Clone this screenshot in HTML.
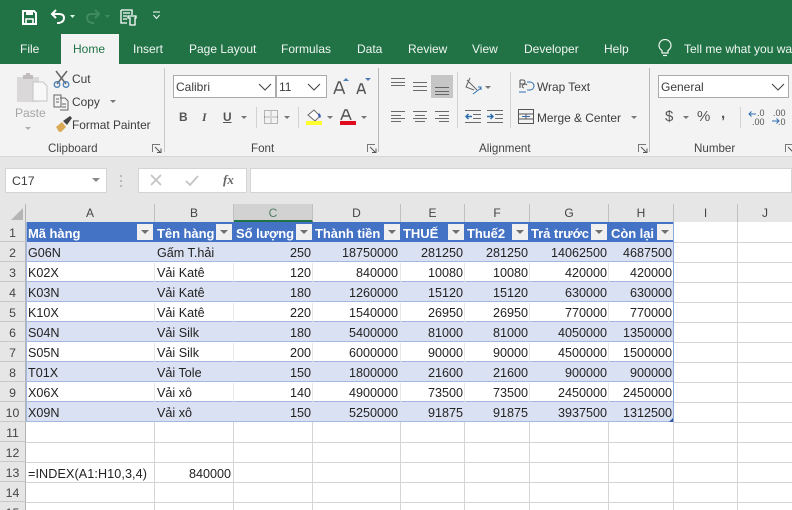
<!DOCTYPE html>
<html><head><meta charset="utf-8">
<style>
html,body{margin:0;padding:0}
#p{position:relative;width:792px;height:510px;overflow:hidden;background:#fff;font-family:"Liberation Sans","Noto Sans CJK SC",sans-serif;color:#262626}
#p div,#p svg{position:absolute}
.t{white-space:nowrap;font-size:11.9px;line-height:16px;color:#3c3c3c}
.tab{color:#f0f6f2;top:41px;font-size:12px;line-height:16px;white-space:nowrap}
.g{top:141px;font-size:11.6px;line-height:16px;color:#444;white-space:nowrap}
.sep{width:1px;background:#d2d2d2}
.box{background:#fff;border:1px solid #ababab;box-sizing:border-box;height:23px;top:75px;font-size:12px;line-height:23px;padding-left:2px;color:#3c3c3c}
.ch{top:204px;height:18px;line-height:18px;text-align:center;font-size:12px;color:#444;background:#e6e6e6;border-right:1px solid #c0c0c0;box-sizing:border-box}
.rh{left:0;width:26px;height:20px;line-height:23px;text-align:center;font-size:12.3px;color:#444;background:#e6e6e6;border-bottom:1px solid #c8c8c8;border-right:1px solid #b4b4b4;box-sizing:border-box}
.r{left:26px;width:648px;height:20px;box-sizing:border-box}
.s{background:#d9e1f2;border-bottom:1px solid #a3b8e0}
.w{background:#fff;border-bottom:1px solid #a3b8e0}
.r div{top:1px;height:19px;line-height:21px;font-size:12.6px;color:#222;white-space:nowrap;box-sizing:border-box}
.a{left:2px}.b{left:131px}
.C{left:207px;width:78px;text-align:right}
.D{left:286px;width:86px;text-align:right}
.E{left:374px;width:63px;text-align:right}
.F{left:438px;width:64px;text-align:right}
.G{left:503px;width:78px;text-align:right}
.H{left:582px;width:64px;text-align:right}
.hd{top:223px;height:20px;line-height:21px;font-size:13px;font-weight:bold;color:#fff;white-space:nowrap;letter-spacing:-.05px}
.fb{width:16px;height:16px;top:224px;background:#f0f0f0;box-sizing:border-box}
.fb:after{content:"";position:absolute;left:4px;top:6px;border:4px solid transparent;border-top:4px solid #707070;border-bottom:0}
.gl{background:#d4d4d4}
.gt{background:#e6e6e6}
.dd{width:0;height:0;border:3px solid transparent;border-top:3px solid #777;border-bottom:0}
</style></head><body><div id="p">

<div style="left:0;top:0;width:792px;height:64px;background:#217346"></div>
<div style="left:61px;top:34px;width:58px;height:30px;background:#f3f3f3"></div>
<div style="left:0;top:64px;width:792px;height:92px;background:#f3f3f3"></div>
<div style="left:0;top:156px;width:792px;height:1px;background:#d6d6d6"></div>
<div style="left:0;top:157px;width:792px;height:47px;background:#e6e6e6"></div>

<!-- QAT -->
<svg style="left:0;top:0" width="175" height="34" viewBox="0 0 175 34" fill="none">
<path d="M23 11h11l2 2v11H23z" stroke="#fff" stroke-width="2"/><path d="M26 11h7v4h-7z" fill="#fff"/><path d="M26 24v-5h7v5" stroke="#fff" stroke-width="1.6"/>
<path d="M56 10l-4 4 4 4" stroke="#fff" stroke-width="2"/><path d="M52 14h7q5 0 5 4t-5 5h-2" stroke="#fff" stroke-width="2"/>
<path d="M70 15h5l-2.500 3z" fill="#dfe" />
<path d="M95 10l4 4-4 4" stroke="#3f8a60" stroke-width="2"/><path d="M99 14h-7q-5 0-5 4t5 5h2" stroke="#3f8a60" stroke-width="2"/>
<path d="M105 15h5l-2.500 3z" fill="#3f8a60"/>
<path d="M121 10h11v5M121 10v13h6M123 13h7M123 16h4M123 19h4" stroke="#fff" stroke-width="1.300"/><path d="M128 16h8v2h-1v7h-5v-7h-2z" stroke="#fff" stroke-width="1.300"/>
<path d="M153 12h7" stroke="#fff"/><path d="M153.500 15l3 3.500 3-3.500" stroke="#fff"/>
</svg>

<!-- tabs -->
<div class="tab" style="left:20px">File</div>
<div class="tab" style="left:73px;color:#217346">Home</div>
<div class="tab" style="left:133px">Insert</div>
<div class="tab" style="left:189px">Page Layout</div>
<div class="tab" style="left:281px">Formulas</div>
<div class="tab" style="left:357px">Data</div>
<div class="tab" style="left:408px">Review</div>
<div class="tab" style="left:472px">View</div>
<div class="tab" style="left:524px">Developer</div>
<div class="tab" style="left:604px">Help</div>
<svg style="left:655px;top:39px" width="20" height="20" viewBox="0 0 20 20" fill="none"><path d="M7 14v-2.500c-1.500-1-3-2.500-3-5a6 6 0 0 1 12 0c0 2.500-1.500 4-3 5V14z" stroke="#f0f6f2" stroke-width="1.200"/><path d="M8 16.500h4" stroke="#f0f6f2" stroke-width="1.200"/></svg>
<div class="tab" style="left:684px">Tell me what you want to do</div>

<!-- Clipboard -->
<svg style="left:14px;top:68px" width="140" height="72" viewBox="0 0 140 72" fill="none">
<path d="M3 9h22v25H3z" fill="#dbd8d9"/><path d="M9 7h10v4H9z" fill="#c0bcbe"/><path d="M12 5h4v3h-4z" fill="#c0bcbe"/>
<path d="M19 14h10l4 4v15H19z" fill="#f8f8f8" stroke="#c4c4c4"/>
<path d="M42 3l10 13M53 3L43 16" stroke="#666" stroke-width="1.500"/>
<circle cx="43" cy="16.500" r="2.800" stroke="#4a7fb8" stroke-width="1.300"/><circle cx="52" cy="16.500" r="2.800" stroke="#4a7fb8" stroke-width="1.300"/>
<path d="M40 27h7l0 12h-7zM46 30h5l3 3v9h-8" stroke="#666"/><path d="M42 31h3M42 34h3M48 36h4M48 39h4" stroke="#666"/>
<path d="M42 59l6-5 4 5-5 5c-2 0-3-1-3-2z" fill="#d9a956"/><path d="M49 53l7-5 2 2-5 7z" fill="#444"/>
</svg>
<div class="t" style="left:15px;top:105px;font-size:12px;color:#a6a6a6">Paste</div>
<div class="dd" style="left:25px;top:127px;border-top-color:#b0b0b0"></div>
<div class="t" style="left:72px;top:71px">Cut</div>
<div class="t" style="left:72px;top:94px">Copy</div>
<div class="dd" style="left:110px;top:100px"></div>
<div class="t" style="left:72px;top:117px">Format Painter</div>
<div class="g" style="left:48px">Clipboard</div>
<svg style="left:152px;top:144px" width="10" height="10" fill="none"><path d="M.5 8V.5H8" stroke="#777"/><path d="M3 3l5 5M5 8.500h4V4.500" stroke="#555"/></svg>
<div class="sep" style="left:164px;top:68px;height:84px;background:#c8c8c8"></div>

<!-- Font -->
<div class="box" style="left:173px;width:103px">Calibri</div>
<div class="box" style="left:276px;width:51px">11</div>
<svg style="left:258px;top:82px" width="70" height="10" fill="none"><path d="M1 2l6 6 6-6M50 2l6 6 6-6" stroke="#444" stroke-width="1.100"/></svg>
<svg style="left:332px;top:77px" width="42" height="20" viewBox="0 0 42 20" fill="none">
<path d="M2 17l4.500-12h1.500l4.500 12M4 13h7" stroke="#555" stroke-width="1.500"/><path d="M11 4l3-3 3 3z" fill="#4a7fb8"/>
<path d="M25 17l3.500-10h1.500l3.500 10M26.500 13.500h5.500" stroke="#555" stroke-width="1.500"/><path d="M33 1h6l-3 3z" fill="#4a7fb8"/>
</svg>
<div class="t" style="left:179px;top:109px;font-weight:bold;color:#555">B</div>
<div class="t" style="left:202px;top:109px;font-style:italic;font-weight:bold;font-family:'Liberation Serif',serif;color:#555">I</div>
<div class="t" style="left:223px;top:109px;font-weight:bold;color:#555;text-decoration:underline">U</div>
<div class="dd" style="left:241px;top:116px"></div>
<div class="sep" style="left:256px;top:107px;height:21px"></div>
<svg style="left:264px;top:110px" width="14" height="14" fill="none"><path d="M.5.500h13v13H.5zM7 .5v13M.5 7h13" stroke="#777" stroke-dasharray="1 1"/></svg>
<div class="dd" style="left:284px;top:116px"></div>
<div class="sep" style="left:298px;top:107px;height:21px"></div>
<svg style="left:306px;top:108px" width="52" height="18" viewBox="0 0 52 18" fill="none">
<path d="M2 7l6-5 6 6-5 5z" stroke="#666" fill="#fff"/><path d="M13 5q3 3 1 5-3-2-1-5z" fill="#3a55b0"/><path d="M0 13h16v4H0z" fill="#ffff2e"/>
<path d="M35 12L39 2h2L45 12M37 8h6" stroke="#555" stroke-width="1.500"/><path d="M34 13h16v4H34z" fill="#e00b1c"/>
</svg>
<div class="dd" style="left:327px;top:116px"></div>
<div class="dd" style="left:361px;top:116px"></div>
<div class="g" style="left:251px">Font</div>
<svg style="left:367px;top:144px" width="10" height="10" fill="none"><path d="M.5 8V.5H8" stroke="#777"/><path d="M3 3l5 5M5 8.500h4V4.500" stroke="#555"/></svg>
<div class="sep" style="left:378px;top:68px;height:84px;background:#b8b8b8"></div>

<!-- Alignment -->
<div style="left:431px;top:75px;width:22px;height:23px;background:#c6c6c6"></div>
<svg style="left:385px;top:70px" width="125" height="60" viewBox="0 0 125 60" fill="none" stroke="#6a6a6a">
<path d="M6 8.500h14M6 12.500h14M6 15.500h14"/>
<path d="M28 12.500h14M28 16.500h14M28 20.500h14"/>
<path d="M50 17.500h14M50 21.500h14M50 24.500h14" stroke="#666"/>
<path d="M6 41.500h14M6 45.500h10M6 48.500h14M6 51.500h10"/>
<path d="M28 41.500h14M30 45.500h10M28 48.500h14M30 51.500h10"/>
<path d="M50 41.500h14M54 45.500h10M50 48.500h14M54 51.500h10"/>
<path d="M80 40.500h16M88 44.500h8M88 48.500h8M80 52.500h16"/><path d="M81 46.500h6M83.500 44l-2.500 2.500 2.500 2.500" stroke="#2f6fb0" stroke-width="1.500"/>
<path d="M102 40.500h16M110 44.500h8M110 48.500h8M102 52.500h16"/><path d="M102 46.500h6M105.500 44l2.500 2.500-2.500 2.500" stroke="#2f6fb0" stroke-width="1.500"/>
<path d="M85 8l-4 9 8 3M82 10l10 10" stroke="#666"/><path d="M88 24l8-6M93 17h3v3" stroke="#2f6fb0"/>
</svg>
<div class="dd" style="left:485px;top:86px"></div>
<div class="sep" style="left:457px;top:72px;height:56px"></div>
<div class="sep" style="left:510px;top:72px;height:56px"></div>
<svg style="left:518px;top:76px" width="18" height="50" viewBox="0 0 18 50" fill="none" stroke="#555">
<path d="M2 12V4M2 4h3a2 2 0 0 1 0 4H2" stroke-width="1.100"/><path d="M9 9q-2-2-4 0t1 3" stroke-width="1"/><path d="M1 16h7M9 6h3a3 3 0 0 1 0 8h-3" stroke="#2f6fb0"/>
<path d="M.5 33.500h15v14H.5zM.5 38h15M.5 43h15M8 38v5"/><path d="M4 40.500h8" stroke="#2f6fb0"/>
</svg>
<div class="t" style="left:537px;top:79px">Wrap Text</div>
<div class="t" style="left:537px;top:110px">Merge &amp; Center</div>
<div class="dd" style="left:631px;top:116px"></div>
<div class="g" style="left:479px">Alignment</div>
<svg style="left:638px;top:144px" width="10" height="10" fill="none"><path d="M.5 8V.5H8" stroke="#777"/><path d="M3 3l5 5M5 8.500h4V4.500" stroke="#555"/></svg>
<div class="sep" style="left:649px;top:68px;height:84px;background:#b8b8b8"></div>

<!-- Number -->
<div class="box" style="left:658px;width:131px">General</div>
<svg style="left:771px;top:82px" width="16" height="10" fill="none"><path d="M1 2l6 6 6-6" stroke="#444" stroke-width="1.100"/></svg>
<div class="t" style="left:665px;top:109px;font-size:15px;color:#555">$</div>
<div class="dd" style="left:683px;top:116px"></div>
<div class="t" style="left:697px;top:109px;font-size:15px;color:#555">%</div>
<div class="t" style="left:721px;top:106px;font-size:15px;font-weight:bold;color:#555">,</div>
<div class="sep" style="left:740px;top:107px;height:21px"></div>
<div class="t" style="left:757px;top:109px;font-size:9px;line-height:9px;color:#555">.0</div>
<div class="t" style="left:752px;top:118px;font-size:9px;line-height:9px;color:#555">.00</div>
<div class="t" style="left:773px;top:109px;font-size:9px;line-height:9px;color:#555">.00</div>
<div class="t" style="left:778px;top:118px;font-size:9px;line-height:9px;color:#555">.0</div>
<svg style="left:748px;top:111px" width="32" height="14" fill="none" stroke="#2f6fb0"><path d="M1 3h7M3.500.5L1 3l2.500 2.500"/><path d="M24 10h7M28.500 7.500L31 10l-2.500 2.500"/></svg>
<div class="g" style="left:694px">Number</div>
<svg style="left:785px;top:144px" width="10" height="10" fill="none"><path d="M.5 8V.5H8" stroke="#777"/><path d="M3 3l5 5" stroke="#555"/></svg>

<!-- formula bar -->
<div style="left:5px;top:168px;width:102px;height:25px;background:#fff;border:1px solid #d4d4d4;box-sizing:border-box"></div>
<div class="t" style="left:12px;top:173px;font-size:12.300px">C17</div>
<div class="dd" style="left:92px;top:178px;border-width:4px;border-bottom:0;border-top-color:#888"></div>
<svg style="left:120px;top:174px" width="4" height="14"><path d="M1 1v2M1 6v2M1 11v2" stroke="#aaa" stroke-width="1.500"/></svg>
<div style="left:138px;top:168px;width:109px;height:25px;background:#fff;border:1px solid #d4d4d4;box-sizing:border-box"></div>
<div style="left:250px;top:168px;width:542px;height:25px;background:#fff;border:1px solid #d4d4d4;box-sizing:border-box"></div>
<svg style="left:148px;top:172px" width="90" height="18" fill="none"><path d="M3 3l10 10M13 3L3 13" stroke="#c4c4c4" stroke-width="1.800"/><path d="M38 9l4 4 8-9" stroke="#c4c4c4" stroke-width="1.800"/></svg>
<div class="t" style="left:223px;top:172px;font-family:'Liberation Serif',serif;font-style:italic;font-weight:bold;font-size:13px;color:#666">fx</div>

<!-- column headers -->
<div style="left:0;top:204px;width:792px;height:18px;background:#e6e6e6"></div>
<div style="left:0;top:204px;width:26px;height:18px;background:#e6e6e6;border-right:1px solid #b4b4b4;box-sizing:border-box"></div>
<svg style="left:9px;top:207px" width="16" height="14"><path d="M14 1v12H2z" fill="#b5b5b5"/></svg>
<div class="ch" style="left:26px;width:129px">A</div>
<div class="ch" style="left:155px;width:79px">B</div>
<div class="ch" style="left:234px;width:79px;background:#d2d2d2;color:#4f7f63;border-bottom:2px solid #217346">C</div>
<div class="ch" style="left:313px;width:88px">D</div>
<div class="ch" style="left:401px;width:64px">E</div>
<div class="ch" style="left:465px;width:65px">F</div>
<div class="ch" style="left:530px;width:79px">G</div>
<div class="ch" style="left:609px;width:65px">H</div>
<div class="ch" style="left:674px;width:64px">I</div>
<div class="ch" style="left:738px;width:54px;border-right:0">J</div>

<!-- row headers -->
<div class="rh" style="top:222px">1</div>
<div class="rh" style="top:242px">2</div>
<div class="rh" style="top:262px">3</div>
<div class="rh" style="top:282px">4</div>
<div class="rh" style="top:302px">5</div>
<div class="rh" style="top:322px">6</div>
<div class="rh" style="top:342px">7</div>
<div class="rh" style="top:362px">8</div>
<div class="rh" style="top:382px">9</div>
<div class="rh" style="top:402px">10</div>
<div class="rh" style="top:422px">11</div>
<div class="rh" style="top:442px">12</div>
<div class="rh" style="top:462px">13</div>
<div class="rh" style="top:482px">14</div>
<div class="rh" style="top:502px">15</div>

<!-- empty gridlines -->
<div class="gl" style="left:26px;top:442px;width:766px;height:1px"></div>
<div class="gl" style="left:26px;top:462px;width:766px;height:1px"></div>
<div class="gl" style="left:26px;top:482px;width:766px;height:1px"></div>
<div class="gl" style="left:26px;top:502px;width:766px;height:1px"></div>
<div class="gl" style="left:674px;top:242px;width:118px;height:1px"></div>
<div class="gl" style="left:674px;top:262px;width:118px;height:1px"></div>
<div class="gl" style="left:674px;top:282px;width:118px;height:1px"></div>
<div class="gl" style="left:674px;top:302px;width:118px;height:1px"></div>
<div class="gl" style="left:674px;top:322px;width:118px;height:1px"></div>
<div class="gl" style="left:674px;top:342px;width:118px;height:1px"></div>
<div class="gl" style="left:674px;top:362px;width:118px;height:1px"></div>
<div class="gl" style="left:674px;top:382px;width:118px;height:1px"></div>
<div class="gl" style="left:674px;top:402px;width:118px;height:1px"></div>
<div class="gl" style="left:674px;top:422px;width:118px;height:1px"></div>
<div class="gl" style="left:154px;top:422px;width:1px;height:88px"></div>
<div class="gl" style="left:233px;top:422px;width:1px;height:88px"></div>
<div class="gl" style="left:312px;top:422px;width:1px;height:88px"></div>
<div class="gl" style="left:400px;top:422px;width:1px;height:88px"></div>
<div class="gl" style="left:464px;top:422px;width:1px;height:88px"></div>
<div class="gl" style="left:529px;top:422px;width:1px;height:88px"></div>
<div class="gl" style="left:608px;top:422px;width:1px;height:88px"></div>
<div class="gl" style="left:673px;top:242px;width:1px;height:268px"></div>
<div class="gl" style="left:737px;top:222px;width:1px;height:288px"></div>

<!-- table -->
<div style="left:26px;top:222px;width:648px;height:20px;background:#4472c4"></div>
<div class="hd" style="left:28px">Mã hàng</div><div class="fb" style="left:137px"></div>
<div class="hd" style="left:157px">Tên hàng</div><div class="fb" style="left:216px"></div>
<div class="hd" style="left:236px">Số lượng</div><div class="fb" style="left:296px"></div>
<div class="hd" style="left:315px">Thành tiền</div><div class="fb" style="left:384px"></div>
<div class="hd" style="left:403px">THUẾ</div><div class="fb" style="left:448px"></div>
<div class="hd" style="left:467px">Thuế2</div><div class="fb" style="left:512px"></div>
<div class="hd" style="left:531px">Trả trước</div><div class="fb" style="left:591px"></div>
<div class="hd" style="left:611px">Còn lại</div><div class="fb" style="left:657px"></div>

<div class="r s" style="top:242px"><div class="a">G06N</div><div class="b">Gấm T.hải</div><div class="C">250</div><div class="D">18750000</div><div class="E">281250</div><div class="F">281250</div><div class="G">14062500</div><div class="H">4687500</div></div>
<div class="r w" style="top:262px"><div class="a">K02X</div><div class="b">Vải Katê</div><div class="C">120</div><div class="D">840000</div><div class="E">10080</div><div class="F">10080</div><div class="G">420000</div><div class="H">420000</div></div>
<div class="r s" style="top:282px"><div class="a">K03N</div><div class="b">Vải Katê</div><div class="C">180</div><div class="D">1260000</div><div class="E">15120</div><div class="F">15120</div><div class="G">630000</div><div class="H">630000</div></div>
<div class="r w" style="top:302px"><div class="a">K10X</div><div class="b">Vải Katê</div><div class="C">220</div><div class="D">1540000</div><div class="E">26950</div><div class="F">26950</div><div class="G">770000</div><div class="H">770000</div></div>
<div class="r s" style="top:322px"><div class="a">S04N</div><div class="b">Vải Silk</div><div class="C">180</div><div class="D">5400000</div><div class="E">81000</div><div class="F">81000</div><div class="G">4050000</div><div class="H">1350000</div></div>
<div class="r w" style="top:342px"><div class="a">S05N</div><div class="b">Vải Silk</div><div class="C">200</div><div class="D">6000000</div><div class="E">90000</div><div class="F">90000</div><div class="G">4500000</div><div class="H">1500000</div></div>
<div class="r s" style="top:362px"><div class="a">T01X</div><div class="b">Vải Tole</div><div class="C">150</div><div class="D">1800000</div><div class="E">21600</div><div class="F">21600</div><div class="G">900000</div><div class="H">900000</div></div>
<div class="r w" style="top:382px"><div class="a">X06X</div><div class="b">Vải xô</div><div class="C">140</div><div class="D">4900000</div><div class="E">73500</div><div class="F">73500</div><div class="G">2450000</div><div class="H">2450000</div></div>
<div class="r s" style="top:402px"><div class="a">X09N</div><div class="b">Vải xô</div><div class="C">150</div><div class="D">5250000</div><div class="E">91875</div><div class="F">91875</div><div class="G">3937500</div><div class="H">1312500</div></div>

<!-- white-row vertical lines -->
<div class="gt" style="left:154px;top:263px;width:1px;height:19px"></div><div class="gt" style="left:233px;top:263px;width:1px;height:19px"></div><div class="gt" style="left:312px;top:263px;width:1px;height:19px"></div><div class="gt" style="left:400px;top:263px;width:1px;height:19px"></div><div class="gt" style="left:464px;top:263px;width:1px;height:19px"></div><div class="gt" style="left:529px;top:263px;width:1px;height:19px"></div><div class="gt" style="left:608px;top:263px;width:1px;height:19px"></div>
<div class="gt" style="left:154px;top:303px;width:1px;height:19px"></div><div class="gt" style="left:233px;top:303px;width:1px;height:19px"></div><div class="gt" style="left:312px;top:303px;width:1px;height:19px"></div><div class="gt" style="left:400px;top:303px;width:1px;height:19px"></div><div class="gt" style="left:464px;top:303px;width:1px;height:19px"></div><div class="gt" style="left:529px;top:303px;width:1px;height:19px"></div><div class="gt" style="left:608px;top:303px;width:1px;height:19px"></div>
<div class="gt" style="left:154px;top:343px;width:1px;height:19px"></div><div class="gt" style="left:233px;top:343px;width:1px;height:19px"></div><div class="gt" style="left:312px;top:343px;width:1px;height:19px"></div><div class="gt" style="left:400px;top:343px;width:1px;height:19px"></div><div class="gt" style="left:464px;top:343px;width:1px;height:19px"></div><div class="gt" style="left:529px;top:343px;width:1px;height:19px"></div><div class="gt" style="left:608px;top:343px;width:1px;height:19px"></div>
<div class="gt" style="left:154px;top:383px;width:1px;height:19px"></div><div class="gt" style="left:233px;top:383px;width:1px;height:19px"></div><div class="gt" style="left:312px;top:383px;width:1px;height:19px"></div><div class="gt" style="left:400px;top:383px;width:1px;height:19px"></div><div class="gt" style="left:464px;top:383px;width:1px;height:19px"></div><div class="gt" style="left:529px;top:383px;width:1px;height:19px"></div><div class="gt" style="left:608px;top:383px;width:1px;height:19px"></div>

<div style="left:673px;top:222px;width:1px;height:200px;background:#8ea9db"></div>
<div style="left:26px;top:222px;width:1px;height:200px;background:#a3b8e0"></div>
<svg style="left:669px;top:418px" width="5" height="4"><path d="M4 0v4H0z" fill="#2f55a4"/></svg>

<div class="t" style="left:28px;top:466px;font-size:12.600px;letter-spacing:.1px;color:#222">=INDEX(A1:H10,3,4)</div>
<div class="t" style="left:155px;top:466px;width:76px;text-align:right;font-size:12.600px;color:#222">840000</div>

</div></body></html>
